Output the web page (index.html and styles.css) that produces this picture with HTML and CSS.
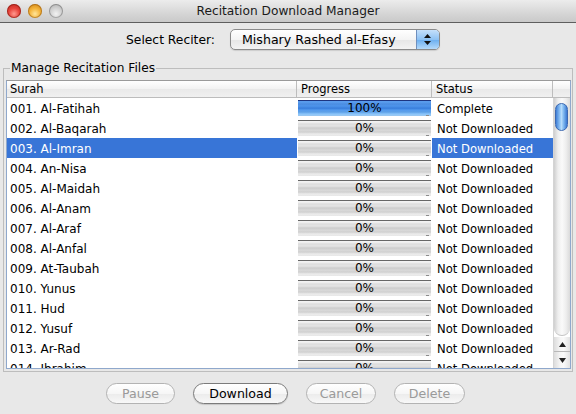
FILE: index.html
```html
<!DOCTYPE html>
<html>
<head>
<meta charset="utf-8">
<title>Recitation Download Manager</title>
<link rel="stylesheet" href="styles.css">
</head>
<body>
<div class="window">
  <div class="titlebar">
    <div class="lights">
      <span class="light red"></span>
      <span class="light orange"></span>
      <span class="light gray"></span>
    </div>
    <div class="title">Recitation Download Manager</div>
    <div></div>
  </div>

  <div class="reciter">
    <span class="label">Select Reciter:</span>
    <div class="combo">
      <span class="combo-text">Mishary Rashed al-Efasy</span>
      <span class="combo-arrow">
        <svg width="9" height="13" viewBox="0 0 9 13"><path d="M4.5 1 L8 5 L1 5 Z M4.5 12 L8 8 L1 8 Z" fill="#111"/></svg>
      </span>
    </div>
  </div>

  <fieldset class="group">
    <legend>Manage Recitation Files</legend>
    <div class="table">
      <div class="thead">
        <div class="th c-surah">Surah</div>
        <div class="th c-prog">Progress</div>
        <div class="th c-status">Status</div>
        <div class="th c-corner"></div>
      </div>
      <div class="tbody">
        <div class="rows">
          <div class="row"><div class="td c-surah">001. Al-Fatihah</div><div class="td c-prog"><div class="bar full">100%</div></div><div class="td c-status">Complete</div></div>
          <div class="row"><div class="td c-surah">002. Al-Baqarah</div><div class="td c-prog"><div class="bar">0%</div></div><div class="td c-status">Not Downloaded</div></div>
          <div class="row selected"><div class="td c-surah">003. Al-Imran</div><div class="td c-prog"><div class="bar">0%</div></div><div class="td c-status">Not Downloaded</div></div>
          <div class="row"><div class="td c-surah">004. An-Nisa</div><div class="td c-prog"><div class="bar">0%</div></div><div class="td c-status">Not Downloaded</div></div>
          <div class="row"><div class="td c-surah">005. Al-Maidah</div><div class="td c-prog"><div class="bar">0%</div></div><div class="td c-status">Not Downloaded</div></div>
          <div class="row"><div class="td c-surah">006. Al-Anam</div><div class="td c-prog"><div class="bar">0%</div></div><div class="td c-status">Not Downloaded</div></div>
          <div class="row"><div class="td c-surah">007. Al-Araf</div><div class="td c-prog"><div class="bar">0%</div></div><div class="td c-status">Not Downloaded</div></div>
          <div class="row"><div class="td c-surah">008. Al-Anfal</div><div class="td c-prog"><div class="bar">0%</div></div><div class="td c-status">Not Downloaded</div></div>
          <div class="row"><div class="td c-surah">009. At-Taubah</div><div class="td c-prog"><div class="bar">0%</div></div><div class="td c-status">Not Downloaded</div></div>
          <div class="row"><div class="td c-surah">010. Yunus</div><div class="td c-prog"><div class="bar">0%</div></div><div class="td c-status">Not Downloaded</div></div>
          <div class="row"><div class="td c-surah">011. Hud</div><div class="td c-prog"><div class="bar">0%</div></div><div class="td c-status">Not Downloaded</div></div>
          <div class="row"><div class="td c-surah">012. Yusuf</div><div class="td c-prog"><div class="bar">0%</div></div><div class="td c-status">Not Downloaded</div></div>
          <div class="row"><div class="td c-surah">013. Ar-Rad</div><div class="td c-prog"><div class="bar">0%</div></div><div class="td c-status">Not Downloaded</div></div>
          <div class="row"><div class="td c-surah">014. Ibrahim</div><div class="td c-prog"><div class="bar">0%</div></div><div class="td c-status">Not Downloaded</div></div>
        </div>
        <div class="scrollbar">
          <div class="track"><div class="thumb"></div></div>
          <div class="arrow up"><svg width="7" height="5" viewBox="0 0 7 5"><path d="M3.5 0 L7 5 L0 5 Z" fill="#222"/></svg></div>
          <div class="arrow down"><svg width="7" height="5" viewBox="0 0 7 5"><path d="M0 0 L7 0 L3.5 5 Z" fill="#222"/></svg></div>
        </div>
      </div>
    </div>
  </fieldset>

  <div class="buttons">
    <button class="btn disabled w-pause">Pause</button>
    <button class="btn w-download">Download</button>
    <button class="btn disabled w-cancel">Cancel</button>
    <button class="btn disabled w-delete">Delete</button>
  </div>
</div>
</body>
</html>
```

FILE: styles.css
```css
* { box-sizing: border-box; }
html, body { margin: 0; padding: 0; }
body {
  width: 576px;
  height: 414px;
  overflow: hidden;
  font-family: "DejaVu Sans", "Noto Sans", sans-serif;
  font-size: 12px;
  color: #000;
}
.window {
  width: 576px;
  height: 414px;
  background: #e8e8e8;
  display: flex;
  flex-direction: column;
}
.titlebar {
  height: 23px;
  display: grid;
  grid-template-columns: 1fr auto 1fr;
  align-items: center;
  background: linear-gradient(#ececec, #d6d6d6 60%, #c9c9c9);
  border-bottom: 1px solid #5e5e5e;
}
.lights {
  display: flex;
  gap: 7px;
  padding-left: 7px;
  padding-bottom: 1px;
}
.light {
  width: 14px;
  height: 14px;
  border-radius: 50%;
  display: block;
}
.light.red {
  background: radial-gradient(circle at 50% 70%, #ff9a8f 0, #e8453c 45%, #b8221b 100%);
  box-shadow: inset 0 0 0 1px rgba(120,20,10,0.55);
}
.light.orange {
  background: radial-gradient(circle at 50% 70%, #ffe59a 0, #f4b43a 45%, #c77a0e 100%);
  box-shadow: inset 0 0 0 1px rgba(140,80,10,0.5);
}
.light.gray {
  background: radial-gradient(circle at 50% 70%, #f2f2f2 0, #cfcfcf 50%, #aaaaaa 100%);
  box-shadow: inset 0 0 0 1px rgba(0,0,0,0.25);
}
.title {
  font-size: 12.2px;
  color: #1a1a1a;
  padding-bottom: 1px;
}
.reciter {
  margin-top: 6px;
  display: flex;
  justify-content: center;
  align-items: center;
  gap: 15px;
  padding-right: 10px;
  height: 21px;
}
.label { font-size: 12.3px; }
.combo {
  width: 210px;
  height: 21px;
  border: 1px solid #8a8a8a;
  border-radius: 5px;
  background: linear-gradient(#ffffff, #f4f4f4 50%, #e6e6e6 51%, #f3f3f3);
  display: flex;
  align-items: center;
  justify-content: space-between;
  overflow: hidden;
  box-shadow: 0 1px 1px rgba(0,0,0,0.12);
}
.combo-text {
  font-size: 12.6px;
  padding-left: 11px;
}
.combo-arrow {
  width: 23px;
  height: 100%;
  display: flex;
  align-items: center;
  justify-content: center;
  border-left: 1px solid #6f8fbd;
  background: linear-gradient(#c5e0fb, #8ec2f4 50%, #6aaef0 51%, #b4dafb);
}
.group {
  margin: 11px 3px 0 3px;
  padding: 5px 1px 2px 2px;
  border: 1px solid #bdbdbd;
  min-width: 0;
}
.group legend {
  padding: 0 1px;
  margin-left: 4px;
  font-size: 12.2px;
  line-height: 14px;
}
.table {
  height: 289px;
  border: 1px solid #8fa8cc;
  border-top-color: #9a9a9a;
  background: #fff;
  display: flex;
  flex-direction: column;
}
.thead {
  height: 17px;
  display: flex;
  border-bottom: 1px solid #bcbcbc;
  background: linear-gradient(#ffffff, #f2f2f2 50%, #e9e9e9 51%, #f0f0f0);
}
.th {
  height: 16px;
  line-height: 16px;
  font-size: 11.5px;
  border-right: 1px solid #bdbdbd;
  white-space: nowrap;
  overflow: hidden;
}
.th.c-surah { padding-left: 3px; }
.th.c-prog { padding-left: 4px; }
.th.c-status { padding-left: 4px; }
.th.c-corner { border-right: none; }
.c-surah { width: 290px; }
.c-prog { width: 135px; }
.c-status { width: 121px; }
.c-corner { width: 17px; }
.tbody {
  height: 270px;
  display: flex;
  overflow: hidden;
}
.rows {
  width: 546px;
  height: 270px;
  overflow: hidden;
}
.row {
  height: 20px;
  display: flex;
}
.td {
  height: 20px;
  line-height: 22px;
  white-space: nowrap;
  overflow: hidden;
}
.td.c-surah { padding-left: 3px; }
.td.c-status { padding-left: 5px; font-size: 11.6px; }
.row.selected .c-surah,
.row.selected .c-status {
  background: #3875d7;
  color: #fff;
}
.td.c-prog { padding: 2px 0 0 1px; line-height: 14px; }
.bar {
  position: relative;
  width: 133px;
  height: 16px;
  line-height: 14px;
  text-align: center;
  border-top: 1px solid #666;
  background:
    repeating-linear-gradient(#00000000 0, #00000000 2px, rgba(0,0,0,0.035) 2px, rgba(0,0,0,0.035) 4px),
    linear-gradient(#f4f4f4, #e2e2e2 30%, #d3d3d3 55%, #dddddd 75%, #f4f4f4);
}
.bar::after {
  content: "";
  position: absolute;
  right: 2px;
  bottom: 0;
  width: 3px;
  height: 1px;
  background: #8a8a8a;
}
.bar.full {
  border-top: 1px solid #1d3580;
  background:
    repeating-linear-gradient(#00000000 0, #00000000 2px, rgba(0,40,120,0.06) 2px, rgba(0,40,120,0.06) 4px),
    linear-gradient(#5c9ded, #4a90e8 35%, #3f87e5 50%, #69aef2 75%, #a9d6fb);
}
.scrollbar {
  width: 17px;
  height: 270px;
  display: flex;
  flex-direction: column;
  background: #fff;
  border-left: 1px solid #d4d4d4;
}
.track {
  flex: 1;
  position: relative;
  background: linear-gradient(to right, #cfcfcf, #eeeeee 25%, #fafafa 50%, #eeeeee 75%, #dadada);
  border-radius: 0 0 8px 8px;
  border-bottom: 1px solid #c4c4c4;
}
.thumb {
  position: absolute;
  top: 5px;
  left: 1px;
  width: 13px;
  height: 28px;
  border-radius: 7px;
  border: 1px solid #3c68b0;
  background: linear-gradient(to right, #3f7ed6, #8ec3f5 35%, #b5dbfb 50%, #7cb6ef 70%, #3a78d2);
}
.arrow {
  height: 15px;
  display: flex;
  align-items: center;
  justify-content: center;
  background: linear-gradient(to right, #dcdcdc, #f6f6f6 40%, #fafafa 60%, #e2e2e2);
}
.arrow.up { border-bottom: 1px solid #b8b8b8; margin-top: 1px; }
.arrow.down { height: 16px; }
.buttons {
  margin-top: 11px;
  display: flex;
  justify-content: center;
  gap: 18px;
  padding-right: 5px;
}
.btn {
  height: 21px;
  border-radius: 11px;
  border: 1px solid #7b7b7b;
  background: linear-gradient(#ffffff, #f6f6f6 50%, #ebebeb 51%, #f8f8f8);
  font-family: "DejaVu Sans", "Noto Sans", sans-serif;
  font-size: 12.6px;
  color: #000;
  padding: 0;
  box-shadow: 0 1px 1px rgba(0,0,0,0.15);
}
.btn.disabled {
  color: #9a9a9a;
  border-color: #b3b3b3;
  box-shadow: none;
}
.w-pause { width: 69px; }
.w-download { width: 95px; }
.w-cancel { width: 70px; }
.w-delete { width: 71px; }
```
